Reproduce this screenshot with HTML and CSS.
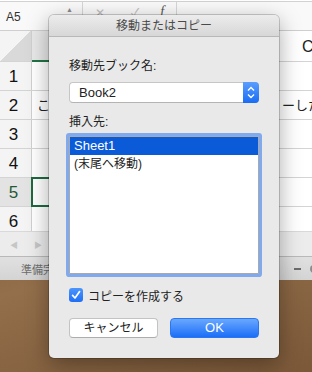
FILE: index.html
```html
<!DOCTYPE html>
<html lang="ja">
<head>
    <meta charset="UTF-8">
    <title>移動またはコピー</title>
    <link rel="stylesheet" href="styles.css">
</head>
<body>
    <div class="excel">
        <div class="formula-bar">
            <div class="name-box">A5<span class="name-arrow">▲</span></div>
            <span class="fx-btn cancel-mark">✕</span>
            <span class="fx-btn ok-mark">✓</span>
            <span class="fx-btn fx-mark">f</span>
        </div>

        <div class="sheet">
            <div class="row head-row">
                <div class="corner"></div>
                <div class="cell col-a sel-col"></div>
                <div class="cell col-b"></div>
                <div class="cell col-c">C</div>
            </div>
            <div class="row"><div class="rh">1</div><div class="cell col-a"></div><div class="cell col-b"></div><div class="cell col-c"></div></div>
            <div class="row"><div class="rh">2</div><div class="cell col-a">こ</div><div class="cell col-b"></div><div class="cell col-c">ーした</div></div>
            <div class="row"><div class="rh">3</div><div class="cell col-a"></div><div class="cell col-b"></div><div class="cell col-c"></div></div>
            <div class="row"><div class="rh">4</div><div class="cell col-a"></div><div class="cell col-b"></div><div class="cell col-c"></div></div>
            <div class="row"><div class="rh sel-row">5</div><div class="cell col-a active"></div><div class="cell col-b"></div><div class="cell col-c"></div></div>
            <div class="row"><div class="rh">6</div><div class="cell col-a"></div><div class="cell col-b"></div><div class="cell col-c"></div></div>
        </div>

        <div class="tab-bar">
            <span class="tab-arrow">◀</span>
            <span class="tab-arrow">▶</span>
        </div>
        <div class="status-bar">
            <span class="status-text">準備完了</span>
            <span class="zoom-ctl"><span class="zoom-minus"></span><span class="zoom-dot"></span></span>
        </div>
    </div>

    <div class="dialog">
        <div class="title-bar">移動またはコピー</div>
        <div class="dialog-body">
            <div class="label">移動先ブック名:</div>
            <div class="popup">
                <span class="popup-value">Book2</span>
                <span class="stepper">
                    <svg width="16" height="21" viewBox="0 0 16 21">
                        <path d="M5 8.5 L8 5.5 L11 8.5" fill="none" stroke="#fff" stroke-width="1.4"/>
                        <path d="M5 12.5 L8 15.5 L11 12.5" fill="none" stroke="#fff" stroke-width="1.4"/>
                    </svg>
                </span>
            </div>

            <div class="label label-dest">挿入先:</div>
            <ul class="list">
                <li class="selected">Sheet1</li>
                <li>(末尾へ移動)</li>
            </ul>

            <label class="check-row">
                <span class="checkbox">
                    <svg width="14" height="14" viewBox="0 0 14 14">
                        <path d="M3.6 7.4 L6 10 L10.6 3.6" fill="none" stroke="#fff" stroke-width="1.7" stroke-linecap="round" stroke-linejoin="round"/>
                    </svg>
                </span>
                コピーを作成する
            </label>

            <div class="buttons">
                <button class="btn">キャンセル</button>
                <button class="btn btn-default">OK</button>
            </div>
        </div>
    </div>
</body>
</html>
```

FILE: styles.css
```css
body {
    margin: 0;
    width: 312px;
    height: 372px;
    overflow: hidden;
    position: relative;
    font-family: 'Liberation Sans', 'Noto Sans CJK JP', sans-serif;
    color: #222;
    background: linear-gradient(165deg, #5c3f27 0%, #7a5738 35%, #936f4b 65%, #7b5838 100%);
}
.excel {
    height: 280px;
    background: #fff;
    display: flex;
    flex-direction: column;
}
.formula-bar {
    height: 28px;
    flex: none;
    border-top: 1px solid #d2d2d2;
    border-bottom: 1px solid #cfcfcf;
    margin-top: 1px;
    background: #f9f9f9;
    display: flex;
    align-items: flex-start;
}
.name-box {
    width: 76px;
    height: 28px;
    padding-left: 6px;
    border-right: 1px solid #d6d6d6;
    font-size: 12px;
    line-height: 31px;
    color: #333;
    position: relative;
}
.name-arrow {
    position: absolute;
    left: 66px;
    top: 2px;
    line-height: 12px;
    font-size: 7px;
    color: #8a8a8a;
}
.fx-btn {
    color: #bdbdbd;
    font-size: 12px;
    line-height: 22px;
}
.cancel-mark { margin-left: 12px; }
.ok-mark { margin-left: 26px; }
.fx-mark {
    margin-left: 21px;
    font-family: 'Liberation Serif', serif;
    font-style: italic;
    font-size: 14px;
    color: #555;
    line-height: 20px;
    padding-right: 12px;
    border-right: 1px solid #d6d6d6;
    height: 14px;
}
.sheet {
    height: 200px;
    overflow: hidden;
    flex: none;
}
.row {
    display: flex;
    height: 29px;
    border-bottom: 1px solid #d4d4d4;
    box-sizing: border-box;
}
.corner, .rh {
    width: 32px;
    flex: none;
    border-right: 1px solid #d0d0d0;
    background: #f4f4f4;
    box-sizing: border-box;
}
.rh {
    font-size: 17px;
    line-height: 30px;
    text-align: center;
    padding-right: 4px;
    color: #111;
}
.rh.sel-row {
    background: #e3e3e3;
    color: #1f5a37;
}
.cell {
    flex: none;
    font-size: 13px;
    line-height: 30px;
    white-space: nowrap;
    box-sizing: border-box;
}
.col-a { width: 80px; padding-left: 5px; }
.col-b { width: 170px; }
.col-c { width: 44px; }
.active {
    border: 2px solid #1e6a3f;
    margin-top: -1px;
    margin-left: -1px;
    height: 30px;
}

/* column header row */
.row.head-row {
    height: 31px;
    border-bottom: none;
}
.head-row .corner {
    background: linear-gradient(135deg, #f4f4f4 50%, #d9d9d9 50%);
    border-bottom: 1px solid #d4d4d4;
}
.head-row .cell {
    border-bottom: 1px solid #d4d4d4;
}
.head-row .cell.col-c {
    font-size: 16px;
    line-height: 32px;
    padding-left: 20px;
}
.head-row .cell.sel-col {
    background: #e8e8e8;
    border-bottom: 2px solid #217346;
}
.tab-bar {
    height: 24px;
    flex: none;
    background: #ececec;
    border-top: 1px solid #d9d9d9;
    display: flex;
    align-items: center;
    gap: 16px;
    padding-left: 10px;
    color: #c6c6c6;
    font-size: 8px;
}
.status-bar {
    flex: 1;
    background: linear-gradient(#e0e0e0, #d4d4d4);
    border-top: 1px solid #b9b9b9;
    display: flex;
    align-items: center;
    justify-content: space-between;
}
.status-text {
    font-size: 11px;
    color: #6d6d6d;
    padding-left: 21px;
}
.zoom-ctl {
    display: flex;
    align-items: center;
    gap: 9px;
    margin-right: -6px;
}
.zoom-minus {
    width: 7px;
    height: 2px;
    background: #6b6b6b;
}
.zoom-dot {
    width: 8px;
    height: 8px;
    border-radius: 50%;
    background: #8c8c8c;
}

/* the sheet dialog */
.dialog {
    position: absolute;
    left: 49px;
    top: 15px;
    width: 230px;
    height: 343px;
    background: #e9e9e9;
    border-radius: 5px;
    box-shadow: 0 0 0 1px rgba(0, 0, 0, 0.18), 0 6px 22px rgba(0, 0, 0, 0.35);
    overflow: hidden;
}
.title-bar {
    height: 21px;
    border-bottom: 1px solid #b8b8b8;
    background: linear-gradient(#ececec, #d7d7d7);
    text-align: center;
    font-size: 12px;
    line-height: 22px;
    color: #4a4a4a;
}
.dialog-body {
    padding: 21px 20px 0;
}
.label {
    font-size: 12px;
    line-height: 16px;
    color: #222;
}
.label-dest {
    margin-top: 11px;
}
.popup {
    margin-top: 8px;
    height: 21px;
    box-sizing: border-box;
    border: 1px solid #c6c6c6;
    border-bottom-color: #b4b4b4;
    border-radius: 4px;
    background: #fff;
    display: flex;
}
.popup-value {
    flex: 1;
    padding-left: 9px;
    font-size: 13px;
    line-height: 19px;
}
.stepper {
    width: 16px;
    margin: -1px -1px -1px 0;
    border-radius: 0 4px 4px 0;
    background: linear-gradient(#5a9dfd, #1a6cf5);
}
.stepper svg { display: block; }
.list {
    margin: 6px 0 0;
    padding: 0;
    list-style: none;
    height: 138px;
    box-sizing: border-box;
    border: 1px solid #a9a9a9;
    background: #fff;
    box-shadow: 0 0 0 3px #80a9ee;
    border-radius: 1px;
}
.list li {
    height: 18px;
    line-height: 18px;
    padding-left: 4px;
    font-size: 13px;
    color: #222;
}
.list li + li { font-size: 12px; }
.list .selected {
    background: #0b5bd8;
    color: #fff;
}
.check-row {
    margin-top: 14px;
    display: flex;
    align-items: center;
    gap: 5px;
    height: 14px;
    font-size: 12px;
}
.checkbox {
    width: 14px;
    height: 14px;
    border-radius: 3px;
    background: linear-gradient(#4c95fc, #1f6ff5);
}
.checkbox svg { display: block; }
.buttons {
    margin-top: 16px;
    display: flex;
    gap: 12px;
}
.btn {
    flex: 1;
    height: 20px;
    padding: 0;
    border: 1px solid #c3c3c3;
    border-bottom-color: #adadad;
    border-radius: 4px;
    background: #fff;
    font-family: 'Liberation Sans', 'Noto Sans CJK JP', sans-serif;
    font-size: 12px;
    color: #222;
    line-height: 18px;
}
.btn-default {
    border-color: #2a76f3;
    background: linear-gradient(#69a8ff, #1b6ef7);
    color: #fff;
    font-size: 13px;
}
```
